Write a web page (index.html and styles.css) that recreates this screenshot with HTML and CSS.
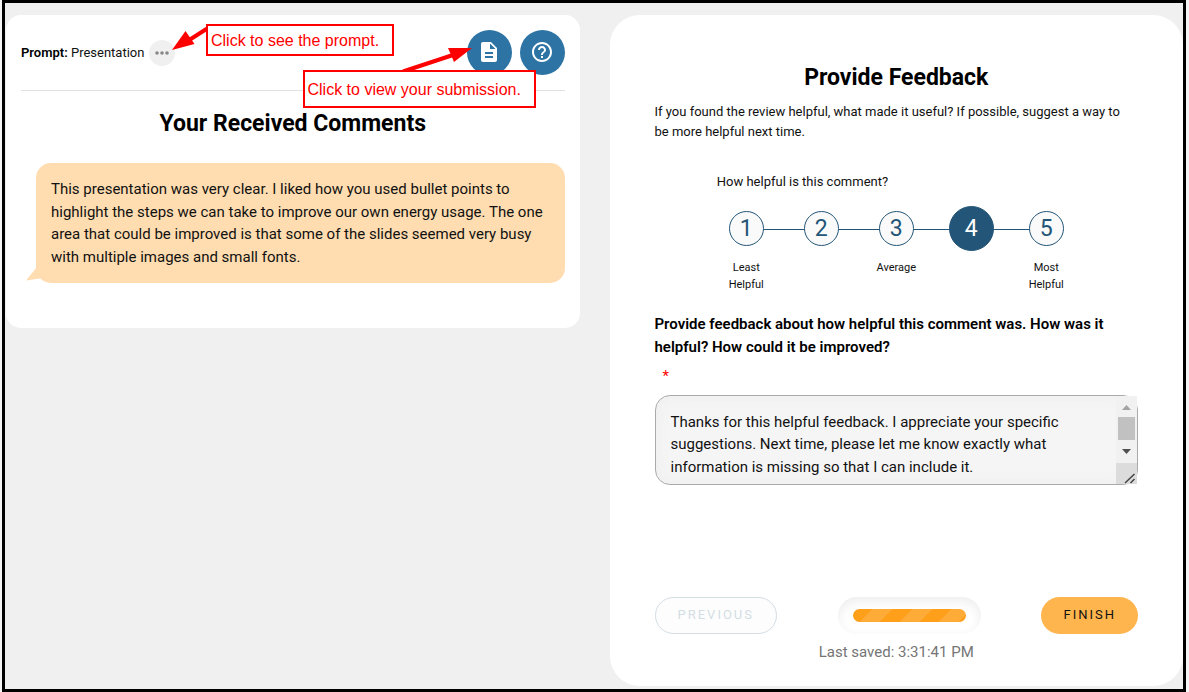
FILE: index.html
```html
<!DOCTYPE html>
<html lang="en">
<head>
  <meta charset="UTF-8" />
  <meta name="viewport" content="width=device-width, initial-scale=1">
  <title>Provide Feedback</title>
  <link rel="stylesheet" href="styles.css">
</head>
<body>

<main class="frame">
  <section class="comments-card">
    <header class="prompt-bar">
      <p class="prompt"><strong>Prompt:</strong> Presentation</p>
      <button type="button" class="more-btn" aria-label="Show prompt">
        <svg width="14" height="4" viewBox="0 0 14 4"><circle cx="2" cy="2" r="1.8"/><circle cx="7" cy="2" r="1.8"/><circle cx="12" cy="2" r="1.8"/></svg>
      </button>
      <div class="tools">
        <button type="button" class="round-btn" aria-label="View submission">
          <svg width="24" height="24" viewBox="0 0 24 24"><path d="M14 2H6c-1.100 0-2 .9-2 2v16c0 1.100.89 2 1.990 2H18c1.100 0 2-.9 2-2V8l-6-6zm2 16H8v-2h8v2zm0-4H8v-2h8v2zm-3-5V3.500L18.500 9H13z"/></svg>
        </button>
        <button type="button" class="round-btn" aria-label="Help">
          <svg width="24" height="24" viewBox="0 0 24 24"><path d="M11 18h2v-2h-2v2zm1-16C6.480 2 2 6.480 2 12s4.480 10 10 10 10-4.480 10-10S17.520 2 12 2zm0 18c-4.410 0-8-3.590-8-8s3.590-8 8-8 8 3.590 8 8-3.590 8-8 8zm0-14c-2.210 0-4 1.790-4 4h2c0-1.100.9-2 2-2s2 .9 2 2c0 2-3 1.750-3 5h2c0-2.250 3-2.500 3-5 0-2.210-1.790-4-4-4z"/></svg>
        </button>
      </div>
    </header>

    <h2>Your Received Comments</h2>

    <div class="bubble">
      <p>This presentation was very clear. I liked how you used bullet points to highlight the steps we can take to improve our own energy usage. The one area that could be improved is that some of the slides seemed very busy with multiple images and small fonts.</p>
      <svg class="bubble-tail" width="16" height="18" viewBox="0 0 16 18"><path d="M11 0V4L0 17.500 14 15.500 16 0Z"/></svg>
    </div>

    <!-- callouts over the toolbar -->
    <svg class="arrows" width="320" height="80" viewBox="0 0 320 80">
      <path class="shaft" d="M38 13 13 29"/>
      <path d="M2 35 15.500 16 24.500 29Z"/>
      <path class="shaft" d="M233 56.500 283 40"/>
      <path d="M302 33 278 33 284 47Z"/>
    </svg>
    <p class="note note-prompt">Click to see the prompt.</p>
    <p class="note note-submission">Click to view your submission.</p>
  </section>

  <form class="feedback-card">
    <h2>Provide Feedback</h2>
    <p class="intro">If you found the review helpful, what made it useful? If possible, suggest a way to be more helpful next time.</p>

    <fieldset class="rating">
      <legend>How helpful is this comment?</legend>
      <div class="scale">
        <label class="step"><input type="radio" name="rating" value="1"><span class="dot">1</span><span class="caption">Least Helpful</span></label>
        <label class="step"><input type="radio" name="rating" value="2"><span class="dot">2</span></label>
        <label class="step"><input type="radio" name="rating" value="3"><span class="dot">3</span><span class="caption">Average</span></label>
        <label class="step"><input type="radio" name="rating" value="4" checked><span class="dot">4</span></label>
        <label class="step"><input type="radio" name="rating" value="5"><span class="dot">5</span><span class="caption">Most Helpful</span></label>
      </div>
    </fieldset>

    <label class="question" for="feedback">Provide feedback about how helpful this comment was. How was it helpful? How could it be improved?</label>
    <span class="required">*</span>
    <div class="answer">
      <textarea id="feedback" required>Thanks for this helpful feedback. I appreciate your specific suggestions. Next time, please let me know exactly what information is missing so that I can include it.</textarea>
      <svg class="scrollbar" width="21" height="88" viewBox="0 0 21 88" aria-hidden="true">
        <path fill="#f1f1f1" d="M0 0H21V67H0Z"/>
        <path fill="#a3a3a3" d="M6 14 10.500 9 15 14Z"/>
        <path fill="#c1c1c1" d="M2 21H19V44H2Z"/>
        <path fill="#505050" d="M6 53 10.500 58 15 53Z"/>
        <path fill="#dcdcdc" d="M0 67H21V88H0Z"/>
        <path fill="none" stroke="#444" stroke-width="1.500" d="M9 87 18.500 78M14.500 87 18.500 83"/>
      </svg>
    </div>

    <footer class="actions">
      <button type="button" class="btn btn-previous" disabled>PREVIOUS</button>
      <div class="progress"><div class="progress-bar"></div></div>
      <button type="button" class="btn btn-finish">FINISH</button>
    </footer>
    <p class="saved">Last saved: 3:31:41 PM</p>
  </form>
</main>

</body>
</html>
```
FILE: styles.css
```css
* {
  box-sizing: border-box;
}
body {
  margin: 0;
  font-family: Roboto, Arial, sans-serif;
  font-size: 15px;
  line-height: 1.5;
  color: #111;
  background-color: #f5f5f5;
}
p, h2 {
  margin: 0;
}
button, textarea {
  font: inherit;
}
button {
  padding: 0;
  border: none;
  cursor: pointer;
}
h2 {
  font-size: 23px;
  font-weight: 700;
  line-height: 36px;
  text-align: center;
  color: #000;
}

.frame {
  display: grid;
  grid-template-columns: 1fr 1fr;
  gap: 30px;
  min-height: 100vh;
  margin: 0 3px 0 2px;
  padding: 12px 0 3px 1px;
  border: 3px solid #000;
  background-color: #f0f0f0;
}

/* received comments */
.comments-card {
  position: relative;
  align-self: start;
  padding: 15px 15px 45px;
  border-radius: 15px;
  background-color: #fff;
}
.prompt-bar {
  display: flex;
  align-items: center;
  gap: 5px;
  padding-bottom: 15px;
  border-bottom: 1px solid #e2e2e2;
  margin-bottom: 15px;
}
.prompt {
  font-size: 13px;
}
.prompt strong {
  font-weight: 600;
  color: #000;
}
.more-btn {
  display: flex;
  align-items: center;
  justify-content: center;
  width: 26px;
  height: 26px;
  border-radius: 50%;
  background-color: #f0f0f0;
}
.more-btn svg {
  fill: #888;
}
.tools {
  display: flex;
  gap: 8px;
  margin-left: auto;
}
.round-btn {
  display: flex;
  align-items: center;
  justify-content: center;
  width: 45px;
  height: 45px;
  padding-bottom: 2px;
  border-radius: 50%;
  background-color: #2d74a4;
}
.round-btn svg {
  fill: #fff;
}
.bubble {
  position: relative;
  margin: 21px 0 0 15px;
  padding: 15px;
  border-radius: 15px;
  background-color: #ffddb0;
}
.bubble-tail {
  position: absolute;
  left: -10px;
  bottom: 2px;
  fill: #ffddb0;
}

.note {
  position: absolute;
  padding: 2px 3px 0;
  border: 2px solid #f00;
  background-color: #fff;
  color: #f00;
  font-family: Arial, "Liberation Sans", sans-serif;
  font-size: 16px;
  white-space: nowrap;
}
.note-prompt {
  top: 9px;
  left: 200px;
  width: 188px;
  line-height: 26px;
}
.note-submission {
  top: 55px;
  right: 44px;
  width: 233px;
  line-height: 32px;
}
.arrows {
  position: absolute;
  top: 0;
  left: 164px;
  fill: #f00;
  pointer-events: none;
}
.arrows .shaft {
  stroke: #f00;
  stroke-width: 4;
}

/* feedback form */
.feedback-card {
  display: flex;
  flex-direction: column;
  padding: 45px 45px 23px;
  border-radius: 30px;
  background-color: #fff;
}
.intro {
  margin: 6px 0 30px;
  padding-right: 8px;
  font-size: 13px;
  line-height: 20px;
}
.rating {
  width: 375px;
  margin: 0 auto 20px;
  padding: 0;
  border: none;
}
.rating legend {
  padding: 0 8px;
  margin-bottom: 14px;
  font-size: 13px;
  line-height: 20px;
}
.scale {
  display: grid;
  grid-template-columns: repeat(5, 1fr);
}
.step {
  position: relative;
  display: grid;
  grid-template-rows: 45px auto;
  gap: 8px;
  justify-items: center;
  align-items: center;
  align-content: start;
  cursor: pointer;
}
.step input {
  position: absolute;
  opacity: 0;
}
/* line to the next step */
.step:not(:last-child)::after {
  content: "";
  position: absolute;
  top: 23px;
  left: 50%;
  width: 100%;
  height: 1px;
  background-color: #225577;
}
.dot {
  position: relative;
  z-index: 1;
  width: 35px;
  height: 35px;
  border: 1px solid #225577;
  border-radius: 50%;
  background-color: #fafafa;
  color: #225577;
  font-size: 23px;
  line-height: 33px;
  text-align: center;
}
.step input:checked + .dot {
  width: 45px;
  height: 45px;
  background-color: #225577;
  color: #fff;
  line-height: 43px;
}
.caption {
  width: 45px;
  font-size: 11px;
  line-height: 17px;
  text-align: center;
}
.question {
  font-weight: 600;
  color: #000;
}
.required {
  margin: 7px 0;
  padding-left: 8px;
  color: #f00;
}
.answer {
  position: relative;
}
textarea {
  display: block;
  width: 100%;
  height: 90px;
  padding: 15px 36px 15px 15px;
  border: 1px solid #aaa;
  border-radius: 15px;
  background-color: #f5f5f5;
  box-shadow: inset 0 0 15px #ededed;
  color: #111;
  resize: none;
  scrollbar-width: none;
}
.scrollbar {
  position: absolute;
  top: 1px;
  right: 1px;
  pointer-events: none;
}

.actions {
  display: flex;
  justify-content: space-between;
  margin-top: auto;
}
.btn {
  height: 37px;
  border-radius: 19px;
  font-size: 13px;
  letter-spacing: 2px;
}
.btn-previous {
  padding: 0 22px;
  border: 1px solid #d3dde4;
  background-color: #fdfdfd;
  color: #d3dde4;
}
.btn-finish {
  padding: 0 22px;
  background-color: #ffb54d;
  color: #111;
}
.progress {
  width: 143px;
  padding: 12px 15px;
  border-radius: 19px;
  background-color: #fff;
  box-shadow: inset 0 4px 12px #ededed;
}
.progress-bar {
  height: 13px;
  border-radius: 7px;
  background: repeating-linear-gradient(135deg, #ff9f1a 0 14px, #ffab38 14px 28px);
}
.saved {
  margin-top: 7px;
  color: #757575;
  text-align: center;
}
```
